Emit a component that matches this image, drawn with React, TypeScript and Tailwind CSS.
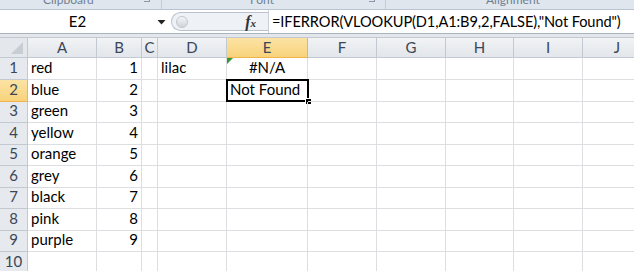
import React from "react";

type Align = "left" | "right" | "center";

interface Col {
  name: string;
  width: string;
}

interface Row {
  n: number;
  height: string;
  cells: Record<string, { text: string; align: Align }>;
}

const cols: Col[] = [
  { name: "A", width: "w-[69px]" },
  { name: "B", width: "w-[45px]" },
  { name: "C", width: "w-[16px]" },
  { name: "D", width: "w-[69px]" },
  { name: "E", width: "w-[81px]" },
  { name: "F", width: "w-[69px]" },
  { name: "G", width: "w-[69px]" },
  { name: "H", width: "w-[68px]" },
  { name: "I", width: "w-[69px]" },
  { name: "J", width: "w-[69px]" },
];

const colors = ["red", "blue", "green", "yellow", "orange", "grey", "black", "pink", "purple"];
const heights = ["h-[22px]", "h-[22px]", "h-[21px]", "h-[22px]", "h-[21px]", "h-[22px]", "h-[21px]", "h-[22px]", "h-[21px]", "h-[22px]"];

const rows: Row[] = heights.map((height, i) => {
  const cells: Row["cells"] = {};
  if (i < colors.length) {
    cells.A = { text: colors[i], align: "left" };
    cells.B = { text: String(i + 1), align: "right" };
  }
  if (i === 0) {
    cells.D = { text: "lilac", align: "left" };
    cells.E = { text: "#N/A", align: "center" };
  }
  if (i === 1) cells.E = { text: "Not Found", align: "left" };
  return { n: i + 1, height, cells };
});

const alignClass: Record<Align, string> = {
  left: "justify-start",
  right: "justify-end",
  center: "justify-center",
};

function RibbonStrip() {
  // only the bottom of the group labels peeks out above the formula bar
  return (
    <div className="relative h-[10px] overflow-hidden border-b border-[#b7c3d1] bg-[#e0e6ed] text-[12px] text-[#6f7f93]">
      <span className="absolute left-[43px] top-[-9px]">Clipboard</span>
      <span className="absolute left-[144px] top-[-4px] h-[6px] w-[6px] border-r border-b border-[#8a97a8]" />
      <span className="absolute left-[161px] top-0 h-full w-px bg-[#c3ccd7]" />
      <span className="absolute left-[250px] top-[-9px]">Font</span>
      <span className="absolute left-[369px] top-[-4px] h-[6px] w-[6px] border-r border-b border-[#8a97a8]" />
      <span className="absolute left-[385px] top-0 h-full w-px bg-[#c3ccd7]" />
      <span className="absolute left-[486px] top-[-9px]">Alignment</span>
    </div>
  );
}

function FormulaBar() {
  return (
    <div className="flex h-[24px] items-stretch border-b border-[#a9b4c1] bg-white">
      <div className="flex w-[171px] items-center">
        <span className="w-[155px] text-center text-[15px] text-black">E2</span>
        <svg width="9" height="6" viewBox="0 0 9 6" className="ml-[2px]">
          <path d="M0.5 1 L8.5 1 L4.5 5.5 Z" fill="#222" />
        </svg>
      </div>
      <div className="my-[2px] flex w-[97px] items-center rounded-l-full border border-r-0 border-[#b8c1cc] bg-[#eef1f5]">
        <span className="ml-[4px] h-[12px] w-[12px] rounded-full border border-[#c2c8cf] bg-gradient-to-b from-[#f4f5f7] to-[#cfd4da]" />
        <span className="ml-auto mr-[12px] font-['Liberation_Serif',serif] text-[16px] font-bold italic text-[#333]">
          f<span className="text-[11px]">x</span>
        </span>
      </div>
      <div className="flex flex-1 items-center border-l border-[#c9d0d8] pl-[3px] text-[14.6px] tracking-[-0.1px] whitespace-nowrap text-black">
        {'=IFERROR(VLOOKUP(D1,A1:B9,2,FALSE),"Not Found")'}
      </div>
    </div>
  );
}

function HeaderRow() {
  return (
    <div className="flex h-[20px]">
      <div className="relative w-[28px] shrink-0 border-r border-b border-[#c3c9d0] bg-[#e4e7eb]">
        <svg width="14" height="14" viewBox="0 0 14 14" className="absolute right-[3px] bottom-[2px]">
          <path d="M13 1 L13 13 L1 13 Z" fill="#c8cdd3" />
        </svg>
      </div>
      {cols.map((c) =>
        c.name === "E" ? (
          <div
            key={c.name}
            className={`${c.width} flex shrink-0 items-center justify-center border-r border-b border-[#f0b44a] bg-gradient-to-b from-[#fbe3a4] to-[#f8d37a] text-[15px] text-[#3b4658]`}
          >
            {c.name}
          </div>
        ) : (
          <div
            key={c.name}
            className={`${c.width} flex shrink-0 items-center justify-center border-r border-b border-[#c3c9d0] bg-gradient-to-b from-[#f1f3f5] to-[#e3e6ea] text-[15px] text-[#3b4658]`}
          >
            {c.name}
          </div>
        )
      )}
    </div>
  );
}

function GridRow({ row }: { row: Row }) {
  const selected = row.n === 2;
  return (
    <div className={`flex ${row.height}`}>
      <div
        className={
          selected
            ? "flex w-[28px] shrink-0 items-end justify-center border-r border-b border-[#f0b44a] bg-gradient-to-b from-[#fbe3a4] to-[#f8d37a] pb-[1px] text-[15px] text-[#3b4658]"
            : "flex w-[28px] shrink-0 items-end justify-center border-r border-b border-[#c3c9d0] bg-[#e6e9ed] pb-[1px] text-[15px] text-[#3b4658]"
        }
      >
        {row.n}
      </div>
      {cols.map((c) => {
        const cell = row.cells[c.name];
        return (
          <div
            key={c.name}
            className={`${c.width} relative flex shrink-0 items-end border-r border-b border-[#dcdee1] px-[3px] pb-[1px] text-[15px] text-black ${
              cell ? alignClass[cell.align] : ""
            }`}
          >
            {cell && <span className="whitespace-nowrap">{cell.text}</span>}
            {row.n === 1 && c.name === "E" && (
              <svg width="6" height="6" viewBox="0 0 6 6" className="absolute left-0 top-0">
                <path d="M0 0 L6 0 L0 6 Z" fill="#2f9a3c" />
              </svg>
            )}
            {selected && c.name === "E" && (
              <>
                <span className="absolute left-[-1px] top-[-1px] right-[-2px] bottom-[-1px] border-[2.5px] border-black" />
                <span className="absolute right-[-5px] bottom-[-4px] h-[7px] w-[7px] border border-white bg-black" />
              </>
            )}
          </div>
        );
      })}
    </div>
  );
}

export default function App() {
  return (
    <div className="h-[271px] w-[634px] overflow-hidden bg-white font-['Lato',sans-serif]">
      <RibbonStrip />
      <FormulaBar />
      <div className="h-[4px] border-b border-[#c3c9d0] bg-[#e3e7ec]" />
      <HeaderRow />
      {rows.map((r) => (
        <GridRow key={r.n} row={r} />
      ))}
    </div>
  );
}
